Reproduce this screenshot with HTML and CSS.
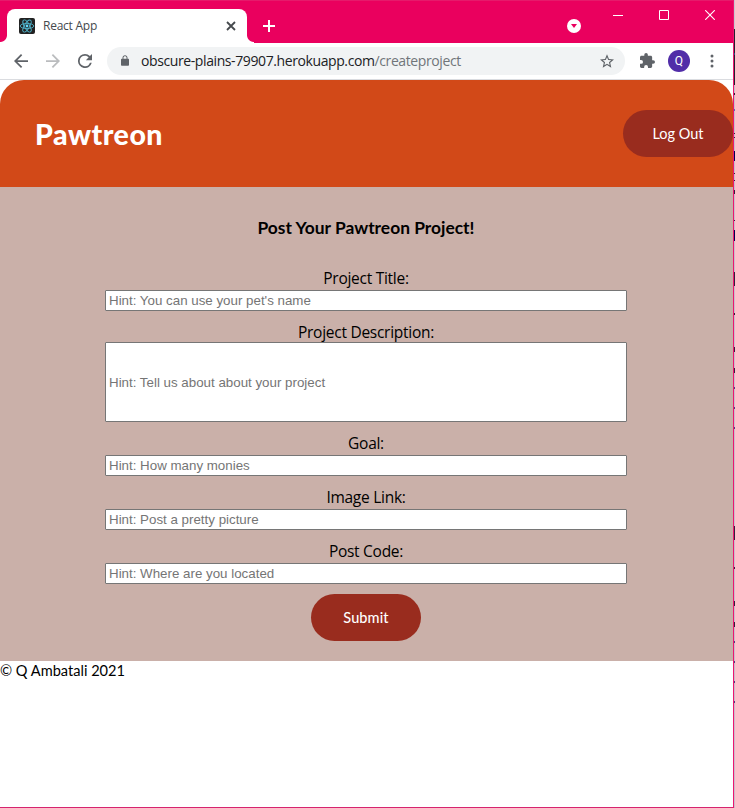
FILE: index.html
```html
<!DOCTYPE html>
<html lang="en">
<head>
<meta charset="utf-8">
<title>React App</title>
<link rel="stylesheet" href="styles.css">
</head>
<body>
<div class="window">
  <div class="tabstrip">
    <div class="tab-edge tab-edge-left"></div>
    <div class="tab">
      <svg class="favicon" viewBox="0 0 16 16"><rect width="16" height="16" rx="2" fill="#222"/><g fill="none" stroke="#4fb3ca" stroke-width=".9"><ellipse cx="8" cy="8" rx="6.8" ry="2.6"/><ellipse cx="8" cy="8" rx="6.8" ry="2.6" transform="rotate(60 8 8)"/><ellipse cx="8" cy="8" rx="6.8" ry="2.6" transform="rotate(120 8 8)"/></g><circle cx="8" cy="8" r="1.4" fill="#61dafb"/></svg>
      <span class="tab-title">React App</span>
      <svg class="tab-close" viewBox="0 0 10 10"><path d="M1 1l8 8M9 1L1 9" stroke="#45494d" stroke-width="1.8"/></svg>
    </div>
    <div class="tab-edge tab-edge-right"></div>
    <svg class="new-tab" viewBox="0 0 12 12"><path d="M6 0v12M0 6h12" stroke="#fff" stroke-width="2"/></svg>
    <svg class="tab-search" viewBox="0 0 14 14"><circle cx="7" cy="7" r="7" fill="#fff"/><path d="M4 5h6L7 9z" fill="#ea005e"/></svg>
    <div class="controls">
      <svg viewBox="0 0 10 10"><path d="M0 5.5h10" stroke="#fff"/></svg>
      <svg viewBox="0 0 10 10"><path d="M.5.5h9v9h-9z" fill="none" stroke="#fff"/></svg>
      <svg viewBox="0 0 10 10"><path d="M.2.2l9.6 9.6M9.8.2L.2 9.8" stroke="#fff" stroke-width="1.1"/></svg>
    </div>
  </div>
  <div class="toolbar">
    <svg class="nav" viewBox="4 4 16 16"><path fill="#5f6368" d="M20 11H7.83l5.59-5.59L12 4l-8 8 8 8 1.41-1.41L7.83 13H20v-2z"/></svg>
    <svg class="nav" viewBox="4 4 16 16"><path fill="#babcbe" d="M12 4l-1.41 1.41L16.17 11H4v2h12.17l-5.58 5.59L12 20l8-8z"/></svg>
    <svg class="nav" viewBox="4 4 16 16"><path fill="#5f6368" d="M17.65 6.35A7.96 7.96 0 0 0 12 4a8 8 0 1 0 7.73 10h-2.08A6 6 0 1 1 12 6c1.66 0 3.14.69 4.22 1.78L13 11h7V4l-2.350 2.350z"/></svg>
    <div class="omnibox">
      <svg class="lock" viewBox="4 1 16 21"><path fill="#5f6368" d="M18 8h-1V6c0-2.760-2.240-5-5-5S7 3.240 7 6v2H6c-1.100 0-2 .9-2 2v10c0 1.100.9 2 2 2h12c1.100 0 2-.9 2-2V10c0-1.100-.9-2-2-2zm-2.900 0H8.900V6c0-1.710 1.390-3.100 3.100-3.100s3.100 1.390 3.100 3.100v2z"/></svg>
      <span class="url">obscure-plains-79907.herokuapp.com<span class="path">/createproject</span></span>
      <svg class="star" viewBox="2 2 20 19"><path fill="#5f6368" d="M22 9.240l-7.190-.62L12 2 9.190 8.630 2 9.240l5.460 4.730L5.820 21 12 17.270 18.180 21l-1.630-7.030L22 9.240zM12 15.400l-3.760 2.270 1-4.280-3.320-2.880 4.380-.38L12 6.100l1.710 4.040 4.380.38-3.320 2.880 1 4.280L12 15.400z"/></svg>
    </div>
    <svg class="puzzle" viewBox="2 1 21 21"><path fill="#5f6368" d="M20.500 11H19V7c0-1.100-.9-2-2-2h-4V3.500a2.500 2.500 0 0 0-5 0V5H4c-1.100 0-1.990.9-1.990 2v3.800H3.500a2.700 2.700 0 0 1 0 5.400H2V20c0 1.100.9 2 2 2h3.800v-1.500a2.700 2.700 0 0 1 5.400 0V22H17c1.100 0 2-.9 2-2v-4h1.500a2.500 2.500 0 0 0 0-5z"/></svg>
    <div class="avatar">Q</div>
    <svg class="dots" viewBox="0 0 4 14"><g fill="#5f6368"><circle cx="2" cy="2" r="1.500"/><circle cx="2" cy="7" r="1.500"/><circle cx="2" cy="12" r="1.500"/></g></svg>
  </div>
  <header class="site-header">
    <h1>Pawtreon</h1>
    <button class="pill">Log Out</button>
  </header>
  <main>
    <h2>Post Your Pawtreon Project!</h2>
    <form>
      <label for="title">Project Title:</label>
      <input id="title" placeholder="Hint: You can use your pet's name">
      <label class="snug" for="desc">Project Description:</label>
      <input id="desc" class="tall" placeholder="Hint: Tell us about about your project">
      <label for="goal">Goal:</label>
      <input id="goal" placeholder="Hint: How many monies">
      <label for="image">Image Link:</label>
      <input id="image" placeholder="Hint: Post a pretty picture">
      <label for="post">Post Code:</label>
      <input id="post" placeholder="Hint: Where are you located">
      <button class="pill submit" type="button">Submit</button>
    </form>
  </main>
  <footer>© Q Ambatali 2021</footer>
</div>
<div class="backdrop"></div>
</body>
</html>
```
FILE: styles.css
```css
* { box-sizing: border-box; }
body { margin: 0; width: 735px; height: 808px; display: flex; overflow: hidden; background: #fff; font-family: "Open Sans", sans-serif; }
svg { display: block; flex: none; }
.window { width: 734px; height: 808px; border-right: 1px solid #ec1770; border-bottom: 1px solid #d6246e; background: #fff; }
.backdrop { width: 1px; height: 808px; background: linear-gradient(#c9c6cf 0 29px, #24202f 29px 53px, #254e87 53px 55px, #24202f 55px 85px, #c9bfcc 85px 93px, #33203c 93px 95px, #c9bfcc 95px 109px, #5d6db0 109px 111px, #c9bfcc 111px 133px, #33203c 133px 134px, #c9bfcc 134px 137px, #33203c 137px 138px, #c9bfcc 138px 151px, #000050 151px 161px, #c9bfcc 161px 173px, #33203c 173px 174px, #c9bfcc 174px 180px, #33203c 180px 181px, #c9bfcc 181px 190px, #33203c 190px 194px, #c9bfcc 194px 220px, #33203c 220px 221px, #c9bfcc 221px 230px, #000050 230px 241px, #c9bfcc 241px 272px, #33203c 272px 286px, #c9bfcc 286px 313px, #33203c 313px 315px, #c9bfcc 315px 347px, #33203c 347px 352px, #c9bfcc 352px 368px, #33203c 368px 373px, #c9bfcc 373px 387px, #4a4080 387px 389px, #c9bfcc 389px 407px, #4a4080 407px 409px, #c9bfcc 409px 427px, #4a4080 427px 429px, #c9bfcc 429px 526px, #33203c 526px 540px, #c9bfcc 540px 567px, #33203c 567px 569px, #c9bfcc 569px 601px, #33203c 601px 606px, #c9bfcc 606px 622px, #33203c 622px 627px, #c9bfcc 627px 641px, #4a4080 641px 643px, #c9bfcc 643px 661px, #4a4080 661px 663px, #c9bfcc 663px 681px, #4a4080 681px 683px, #c9bfcc 683px 701px, #4a4080 701px 703px, #c9bfcc 703px); }

.tabstrip { height: 43px; display: flex; align-items: flex-start; background: #ea005e; border-top: 1px solid #e61a6b; }
.tab { width: 240px; height: 34px; margin-top: 8px; padding: 0 11px 0 12px; display: flex; align-items: center; background: #fff; border-radius: 8px 8px 0 0; }
.tab-edge { width: 7px; height: 8px; margin-top: 34px; }
.tab-edge-left { background: radial-gradient(circle at 0 0, #ea005e 6.5px, #fff 7.5px); }
.tab-edge-right { background: radial-gradient(circle at 100% 0, #ea005e 6.5px, #fff 7.5px); }
.favicon { width: 16px; height: 16px; }
.tab-title { flex: 1; margin: -1px 0 0 8px; font-size: 12px; letter-spacing: -.25px; color: #45494d; }
.tab-close { width: 10px; height: 10px; }
.new-tab { width: 12px; height: 12px; margin: 19px 0 0 9px; }
.tab-search { width: 14px; height: 14px; margin: 18px 0 0 292px; }
.controls { display: flex; gap: 36px; margin: 9px 0 0 32px; }
.controls svg { width: 10px; height: 10px; }

.toolbar { height: 37px; display: flex; align-items: center; padding: 0 18px 1px 14px; border-bottom: 1px solid #dadce0; }
.nav { width: 14px; height: 14px; margin-right: 18px; }
.omnibox { width: 518px; height: 28px; margin-left: -3px; padding: 0 11px 0 14px; display: flex; align-items: center; border-radius: 14px; background: #f1f3f4; }
.lock { width: 8px; height: 11px; }
.url { flex: 1; margin-left: 12px; font-size: 14px; letter-spacing: -.4px; color: #202124; white-space: nowrap; }
.path { color: #70757a; }
.star { width: 14px; height: 14px; }
.puzzle { width: 15px; height: 15px; margin-left: 15px; }
.avatar { width: 22px; height: 22px; margin-left: 13px; border-radius: 50%; background: #512da8; color: #fff; font: 12px/22px Roboto, sans-serif; text-align: center; }
.dots { width: 4px; height: 14px; margin-left: 20px; }

.site-header { height: 107px; padding-left: 35px; display: flex; align-items: center; justify-content: space-between; background: #d24918; border-radius: 24px 24px 0 0; }
h1 { margin: 0; font: 900 28.5px/40px Lato, sans-serif; letter-spacing: .5px; color: #fff; }
.pill { width: 110px; height: 47px; padding: 0; border: 0; border-radius: 24px; background: #992c1e; color: #fff; font: 14.500px Lato, sans-serif; }
main { height: 474px; background: #cab0a9; padding: 29px 1px 0 0; }
h2 { margin: 0 0 27px; font: bold 17.400px/24px Lato, sans-serif; text-align: center; color: #000; }
form { display: flex; flex-direction: column; align-items: center; }
label { height: 23px; font-size: 15.500px; line-height: 22px; letter-spacing: -.27px; color: #000; }
label.snug { height: 21px; }
form input { width: 522px; height: 21px; margin-bottom: 10px; padding: 1px 3px; border: 1px solid #767676; border-radius: 1px; background: #fff; font: 13.333px "Liberation Sans", Arial, sans-serif; }
form input.tall { height: 80px; }
input::placeholder { color: #757575; opacity: 1; }
.submit { font-weight: 500; letter-spacing: .1px; }
footer { font: 14.600px/20px Lato, sans-serif; color: #000; }
```
